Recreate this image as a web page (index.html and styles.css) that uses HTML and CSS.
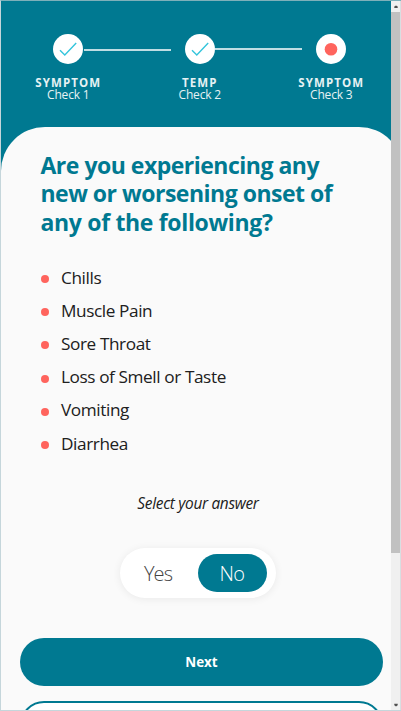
FILE: index.html
```html
<!DOCTYPE html>
<html lang="en">
<head>
<meta charset="utf-8">
<title>Symptom check</title>
<link rel="stylesheet" href="styles.css">
</head>
<body>
<div class="window">
  <div class="viewport">
    <main class="page">
      <header class="steps">
        <div class="track">
          <span class="dot"><svg width="30" height="30" viewBox="0 0 30 30"><path d="M7 16.3l4.8 4.8L23.2 9"/></svg></span>
          <span class="line"></span>
          <span class="dot"><svg width="30" height="30" viewBox="0 0 30 30"><path d="M7 16.3l4.8 4.8L23.2 9"/></svg></span>
          <span class="line second"></span>
          <span class="dot"><svg width="30" height="30" viewBox="0 0 30 30"><circle cx="15" cy="15.3" r="6.3"/></svg></span>
        </div>
        <div class="labels">
          <div><b>SYMPTOM</b><span>Check 1</span></div>
          <div><b>TEMP</b><span>Check 2</span></div>
          <div><b>SYMPTOM</b><span>Check 3</span></div>
        </div>
      </header>
      <section class="card">
        <h1><span>Are you experiencing any</span><span>new or worsening onset of</span><span class="last">any of the following?</span></h1>
        <ul>
          <li>Chills</li>
          <li>Muscle Pain</li>
          <li>Sore Throat</li>
          <li>Loss of Smell or Taste</li>
          <li>Vomiting</li>
          <li>Diarrhea</li>
        </ul>
        <p class="hint">Select your answer</p>
        <div class="toggle"><span class="option">Yes</span><span class="option on">No</span></div>
        <button class="next">Next</button>
        <button class="back"></button>
      </section>
    </main>
  </div>
  <div class="scrollbar">
    <span class="arrow"><svg width="4" height="4" viewBox="0 0 4 4"><path d="M.3 3V1.6L2 .4l1.7 1.2V3z"/></svg></span>
    <span class="thumb"></span>
    <span class="arrow down"><svg width="4" height="4" viewBox="0 0 4 4"><path d="M.3 .8V2.2L2 3.5l1.7-1.3V.8z"/></svg></span>
  </div>
</div>
</body>
</html>
```
FILE: styles.css
```css
* { box-sizing: border-box; }
body { margin: 0; font-family: "Open Sans", "Noto Sans", sans-serif; background: #fafafa; overflow: hidden; }
.window { width: 401px; height: 711px; display: flex; border: 1px solid #c5d6db; border-top-color: #7eb0ba; border-right: 0; }
.viewport { width: 390px; height: 709px; overflow: hidden; background: #007991; }
.page { width: 402px; }
.steps { height: 126px; padding-top: 33px; color: #e6f2f4; }
.track { display: flex; align-items: center; height: 30px; padding-left: 52px; }
.dot { width: 30px; height: 30px; border-radius: 50%; background: #fff; flex: none; }
.dot svg { display: block; }
.dot path { fill: none; stroke: #35c5dc; stroke-width: 1.4; }
.dot circle { fill: #ff645d; }
.line { width: 87px; height: 2px; background: #bfdde3; margin: 2px 14px 0 1px; flex: none; }
.line.second { margin: 0 14px 0 0; }
.labels { display: grid; grid-template-columns: repeat(3, 131.5px); padding-left: 1px; margin-top: 12px; text-align: center; }
.labels b, .labels span { display: block; white-space: nowrap; }
.labels b { font-size: 11.5px; line-height: 13px; letter-spacing: 1.1px; padding-left: 1px; }
.labels span { font-size: 12px; line-height: 12px; letter-spacing: -.2px; padding-left: 1px; }
.card { height: 640px; background: #fafafa; border-radius: 44px 44px 0 0; padding: 24px 19px 0; }
h1 { margin: 0 0 0 20.5px; font-size: 23px; line-height: 28.3px; font-weight: 700; color: #007991; white-space: nowrap; letter-spacing: -.5px; }
h1 span { display: block; }
h1 .last { letter-spacing: -.33px; }
ul { list-style: none; margin: 24.6px 0 0 20.5px; padding: 0; }
li { display: flex; align-items: center; height: 33.2px; font-size: 17.2px; color: #202020; letter-spacing: -.4px; }
li::before { content: ""; width: 8px; height: 8px; margin: 4px 12.5px 0 0; border-radius: 50%; background: #ff645d; }
.hint { margin: 33px 0 0; padding-right: 8px; height: 22px; line-height: 22px; text-align: center; font-size: 15.4px; font-style: italic; color: #202020; letter-spacing: -.3px; }
.toggle { display: flex; width: 156px; height: 50px; margin: 33.5px 0 0 100px; padding: 6px 9px; border-radius: 25px; background: #fff; box-shadow: 0 1px 9px rgba(0,0,0,.07); }
.option { width: 69px; height: 38px; line-height: 40px; border-radius: 19px; text-align: center; font-size: 20px; font-weight: 300; color: #444; letter-spacing: -.9px; padding-right: 11px; }
.option.on { background: #007991; color: #fff; padding: 0 1px 0 0; letter-spacing: -.6px; }
button { display: block; width: 363px; height: 48px; border-radius: 24px; padding: 0; font-family: inherit; }
.next { margin-top: 40px; border: 0; background: #007991; color: #fff; font-size: 13.4px; font-weight: 700; }
.back { margin-top: 15px; border: 2px solid #007991; background: #fff; }
.scrollbar { width: 10px; height: 709px; background: #f0f0f0; border-right: 1px solid #d8dfe1; display: flex; flex-direction: column; }
.arrow { height: 11px; display: flex; align-items: center; justify-content: center; }
.arrow svg { fill: #505050; }
.thumb { height: 541px; background: #c1c1c1; }
.down { margin-top: auto; }
```
